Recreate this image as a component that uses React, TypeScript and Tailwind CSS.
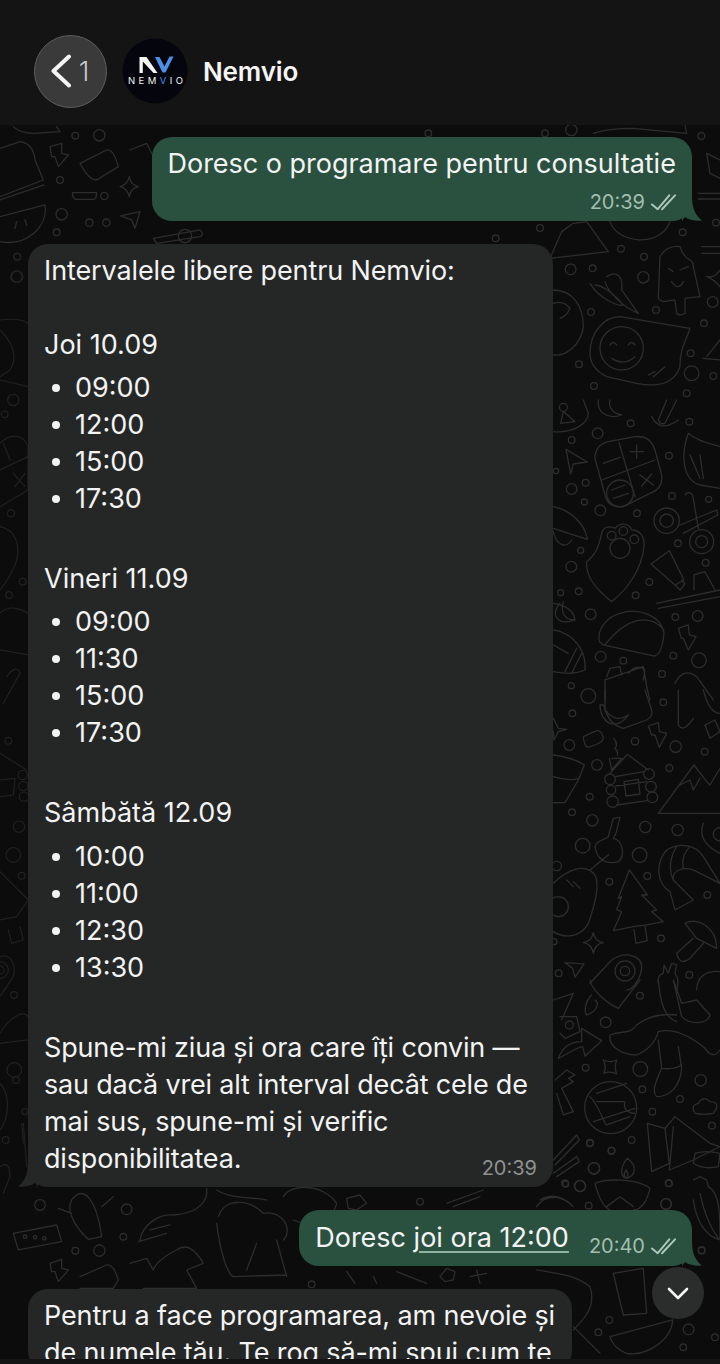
const doodles = [
  // right column, y 400-700
  {
    x: 540, y: 400,
    circles: [[173,100,16],[95,120,10],[272,70,10],[448,65,10],[387,167,10],[48,213,8],[95,267,16],[137,248,10],[133,306,9],[181,331,16],[291,340,10],[396,288,10],[506,298,9],[122,451,9],[94,500,16],[414,430,10],[497,488,10],[328,546,10],[62,578,9],[116,574,10],[287,586,10],[152,643,16],[406,651,10],[473,648,16],[182,770,16],[250,782,10],[400,767,10],[477,781,22],[366,822,10],[94,857,9],[240,280,40],[240,445,30],[215,407,13],[250,393,13],[283,418,13],[380,362,38],[380,362,20],[485,425,36],[485,425,18],[70,22,12]],
    paths: [
      "M165 175 Q165 135 205 125 L285 110 Q330 105 345 150 L365 225 Q370 265 330 280 L250 320 Q205 325 195 285 Z",
      "M237 127 L285 290 M185 240 L345 180 M270 155 H310 M290 135 V175 M190 190 L240 172 M300 225 L340 255 M335 222 L305 258 M215 270 L255 255 M220 295 L265 280",
      "M78 148 L142 186 L100 192 L92 222 Z",
      "M215 605 C170 570 135 530 140 485 C160 470 175 450 185 400 C190 375 215 380 225 385 C240 365 270 370 275 390 C300 390 315 410 312 440 C305 510 260 570 215 605 Z",
      "M420 375 L530 330 L533 345 L430 400 M435 285 Q445 270 458 285 L475 385",
      "M333 492 L388 452 L432 540 L405 555 Z M405 555 L420 570 L435 552 L425 540",
      "M350 610 L540 570 M355 625 L540 590 M462 570 L462 525 L495 515 L525 570",
      "M190 735 L340 768 Q365 770 372 700 C365 650 300 620 240 640 C200 650 170 690 178 725 Z M195 735 C260 650 330 640 372 690",
      "M415 685 L445 675 L448 705 L468 710 L445 750 L430 715 L424 715 Z",
      "M60 610 C30 640 50 680 105 660 C75 660 60 640 70 605",
      "M40 690 C100 700 140 750 135 810 C100 825 70 820 40 815 M110 745 L75 815 M125 760 L95 820 M40 735 L85 760",
      "M40 320 C90 330 135 370 142 418 L40 385 M40 395 C50 440 80 445 95 420",
      "M445 100 C480 130 530 135 540 140 M445 100 C420 170 430 240 480 255 L540 265 M450 165 L480 235 M480 165 L490 235",
      "M380 0 L355 60 Q360 75 375 70 L410 0 M335 50 Q360 100 415 60",
      "M40 95 C100 100 145 70 145 40 L130 0 M70 34 L62 70 L105 65 Z",
      "M175 0 C170 35 200 60 245 45 C215 40 205 20 210 0",
      "M195 900 L195 840 L310 800 L320 860 L330 900 M200 830 L210 805 L240 800 L245 825 M265 820 Q290 790 315 810 L310 840",
      "M405 850 Q430 800 470 830 L520 900",
      "M40 610 Q100 620 105 660",
    ],
  },
  // right column, y 690-990
  {
    x: 540, y: 690,
    circles: [[145,18,22],[97,70,10],[370,37,10],[88,165,16],[285,154,11],[407,170,17],[494,185,10],[171,225,16],[388,234,10],[149,320,10],[96,367,10],[157,391,17],[316,411,17],[413,420,17],[128,467,22],[299,495,22],[50,528,14],[322,558,10],[208,575,10],[502,615,10],[363,745,10],[42,755,9],[56,850,10],[448,855,10],[210,268,16],[213,300,14],[218,335,17],[327,252,16],[333,290,16],[337,322,16],[55,650,30],[255,843,30],[255,843,14],[540,433,20]],
    paths: [
      "M195 0 L195 60 Q210 105 250 115 L320 90 Q340 80 335 60 L315 0",
      "M180 45 C180 100 230 125 265 75 C235 95 205 85 190 45 Z",
      "M415 0 L415 105 Q430 130 460 85 M490 0 C500 40 515 70 540 70 M495 105 L525 90 L540 125 L510 145 Z",
      "M325 108 L355 98 L358 125 L380 130 L358 172 L345 135 L335 135 Z",
      "M130 140 L170 122 Q185 120 190 145 Q190 155 165 165 L145 172 Q132 170 130 140 Z",
      "M40 85 L55 115 L80 118 L55 125 L42 150 L40 125",
      "M40 195 C80 200 110 210 133 225 L115 270 L75 338 L40 338 M40 260 C70 270 100 270 118 265",
      "M210 250 L262 193 L325 240 M215 205 L245 205 L215 240 L208 205 M225 260 L312 245 M230 345 L322 332 M228 288 L320 275 M252 275 L295 268 L300 312 L258 318 Z M222 145 Q235 165 225 175 Q235 185 232 195",
      "M355 370 L540 370 M355 370 L462 225 L500 275 L510 285 L540 235 M420 285 L450 270 L460 300 L480 265",
      "M220 385 L240 382 L228 430 L220 445 C250 450 255 500 235 515 C200 525 170 510 165 470 C170 450 195 450 205 440 Z",
      "M40 580 C80 540 130 520 160 550 C180 570 170 630 145 700 C120 745 70 745 40 725 M150 540 L205 495 M80 570 L100 590 M100 575 L120 595",
      "M268 540 L322 615 L305 615 L350 660 L335 665 L370 695 L320 705 L280 710 L220 722 L245 665 L230 660 L245 620 L235 625 Z M282 718 L288 760 L322 752 L315 710",
      "M380 480 C420 455 470 465 490 500 L540 580 L460 540 C430 530 395 540 400 570 L460 630 L405 660 L390 605 C350 580 345 520 380 480 Z M410 470 C390 500 385 540 400 570 M450 470 C430 490 425 510 430 535",
      "M435 700 C470 680 530 710 530 775 L470 745 Z M460 745 L410 790 Q420 830 450 805 L490 760",
      "M150 880 L215 810 C260 780 305 800 305 830 C305 860 280 900 260 900",
      "M355 880 Q350 855 370 850 L372 825 L385 850 L395 820 L410 825 L405 850 Q420 870 410 900",
      "M470 900 C470 860 500 840 540 845",
      "M490 400 C475 440 500 470 540 490",
      "M160 728 Q165 755 190 758 Q165 762 160 790 Q155 762 130 758 Q155 755 160 728",
      "M75 818 L132 822 L105 862 L98 835 Z",
    ],
  },
  // right column, y 980-1280
  {
    x: 540, y: 980,
    circles: [[300,47,10],[197,127,16],[137,263,10],[301,267,22],[307,328,10],[482,301,17],[420,357,10],[337,395,10],[516,437,10],[150,490,10],[275,480,10],[214,512,10],[162,565,17],[77,612,9],[120,618,17],[386,610,10],[378,672,16],[146,677,10],[485,812,10],[212,383,78],[88,135,12]],
    paths: [
      "M150 350 C180 380 190 430 200 435 M255 365 C245 400 285 400 285 400 M160 425 L285 385 M200 435 L270 410 M170 365 L250 365 M170 340 L260 310",
      "M190 240 Q210 250 230 240 Q222 262 230 282 Q210 272 192 280 Q200 260 190 240",
      "M465 400 Q450 375 475 370 Q490 345 510 365 Q535 365 530 385 L520 400 Q490 405 465 400",
      "M322 430 L375 445 L405 410 L510 490 L540 500 L460 540 L388 570 L400 440 M322 430 L335 575 L388 550 L375 445",
      "M465 520 Q500 510 540 520 L535 560 Q490 570 460 550 Z",
      "M460 600 L480 590 L500 600 L505 620 C540 640 540 700 540 780 C500 770 470 730 460 660 M480 640 C490 690 510 740 535 775",
      "M165 610 C200 595 290 595 330 625 C320 670 300 690 280 690 M165 610 C175 650 190 680 210 690",
      "M262 535 C240 560 240 590 258 595 C285 590 295 560 262 535 Z M258 570 Q248 585 258 595 Q270 585 258 570",
      "M410 105 C370 100 330 105 290 135 C270 165 250 150 210 165 C205 195 240 225 290 225 C325 210 345 190 355 155 C395 145 440 160 495 205",
      "M355 180 L365 265 C345 310 335 335 350 350 C390 350 420 320 425 265 L415 200 M365 265 Q400 270 425 255 M495 205 Q520 240 540 210",
      "M355 0 C360 60 370 110 410 125 M400 0 L425 70 L470 60 L510 105 C500 135 450 135 425 110 Z",
      "M55 235 C70 195 100 185 125 185 L125 145 L185 182 L135 228 L128 200 C100 205 80 225 55 235 Z",
      "M155 45 C130 70 135 100 140 105 C170 95 180 70 165 60 M150 0 C155 30 200 70 235 85 L300 0",
      "M45 300 L80 270 L105 285 L85 295 L100 305 L65 325 L100 395 L70 405 L50 340",
      "M40 540 L110 465 L118 480 L45 555 M40 580 L110 530 L118 545 L50 590",
      "M40 60 L100 40 L65 120 M60 110 L110 110 L120 155 L75 175 L60 160",
      "M0 660 Q50 630 100 680 M200 680 L240 650 L280 680",
    ],
  },
  // top, under the first bubbles
  {
    x: 0, y: 0,
    circles: [[226,407,10],[298,406,17],[180,540,10],[313,588,11],[185,643,17],[268,668,11],[319,668,11],[170,697,10],[52,770,10],[50,830,17],[555,708,20]],
    paths: [
      "M0 445 L60 425 Q100 430 105 480 L130 540 L0 590 M0 600 L132 555",
      "M0 650 L135 615 C145 680 80 740 0 725 M50 665 L45 685 M75 660 L80 675",
      "M150 440 L185 430 L185 460 L205 465 L175 500 L165 470 L155 470 Z",
      "M240 490 L320 450 Q340 445 355 500 L290 540 Q265 540 240 490",
      "M218 578 L290 578 Q290 598 280 598 L225 598 Q215 590 218 578",
      "M388 530 Q392 555 415 560 Q392 565 388 590 Q382 565 360 560 Q382 555 388 530",
      "M390 450 L440 430 L460 470",
      "M362 648 L420 635 L405 685 L395 660 Z",
      "M460 715 L600 690 Q615 705 600 710 L470 730 Z",
      "M40 380 Q60 400 100 400 L180 395 L170 380",
    ],
  },
  // top right corner
  {
    x: 360, y: 100,
    circles: [[205,100,10],[555,100,10],[634,90,17],[1024,108,10],[540,384,10],[407,415,10],[968,397,10],[1068,368,10],[783,446,10],[852,470,10],[632,508,16],[698,505,10],[850,532,17],[1058,606,16],[693,636,10],[888,630,10],[1032,670,10],[657,793,10],[992,760,10],[995,820,22],[1060,828,10],[702,858,10],[980,880,10],[785,745,65]],
    paths: [
      "M570 475 L605 395 L640 370 L680 365 L745 455 Z",
      "M750 365 C770 430 900 445 930 365",
      "M900 470 Q920 435 960 440 C975 490 1000 470 1000 500 L1020 590 L975 595 L975 640 Q960 650 950 640 L945 600 L910 605 Q895 600 895 590 Z M925 505 L940 515 M960 510 L985 500 M935 545 Q955 575 970 545",
      "M690 550 C720 600 780 620 790 615 C770 590 730 555 705 555 M740 530 C770 510 790 530 785 570 L835 640 C790 620 745 580 735 545",
      "M690 760 C690 700 730 650 780 650 L990 685 C980 720 960 740 960 800 C940 860 880 860 830 850 L740 830 C710 815 690 790 690 760",
      "M750 735 Q760 720 770 735 M805 735 Q815 720 825 735 M755 775 Q790 800 825 770 M865 825 L885 815 M880 830 L915 800",
      "M580 570 C640 570 670 620 670 680 C665 730 620 770 580 765 M580 610 Q610 600 630 625 Q620 650 600 655",
      "M1015 280 L1080 280 M1015 297 L1080 297 M1025 440 L1080 440 M1025 460 L1080 460",
      "M1040 530 Q1065 535 1080 510 M1040 530 Q1065 540 1080 560",
      "M1040 770 L1080 720 M1030 775 L1080 780",
      "M1040 160 L1080 180 M1040 160 L1050 220 L1080 235",
      "M700 100 C730 90 760 85 820 85 L980 100 L975 75",
    ],
  },
  // gap rows near the bottom
  {
    x: 0, y: 1100,
    circles: [[120,315,16],[380,328,16],[370,410,10],[226,452,10],[298,452,17],[75,410,5],[105,412,5],[133,415,5]],
    paths: [
      "M215 300 C250 250 290 300 305 410 L265 418 C235 390 195 340 215 300 M215 340 L175 325 M305 320 L340 290",
      "M40 400 L170 375 L185 425 L55 450 Z",
      "M420 420 C430 370 480 340 520 345 C600 340 625 300 620 265 M415 425 L500 400 M450 390 L510 375",
      "M650 270 C700 300 760 290 800 300 M650 370 C660 450 680 520 700 530 L860 525 M740 510 L770 430 M830 420 L860 530",
      "M150 490 L185 478 L185 505 L205 510 L175 545 L165 515 L155 515 Z",
      "M240 530 L320 495 Q340 490 355 540 L340 565 L240 565",
      "M390 490 L440 475 L460 510 Q470 480 530 450 Q570 420 610 490 L560 510 L590 565 L430 565",
      "M655 350 C670 300 740 290 790 340 C850 330 880 390 850 420",
    ],
  },
  {
    x: 280, y: 1140,
    circles: [[930,8,10],[995,32,10],[942,85,17],[855,130,10],[900,138,16],[1167,130,10],[1158,192,16],[420,185,10],[1265,330,10],[988,540,10],[955,577,10],[1226,568,16],[1305,592,10],[1210,622,10],[95,433,10]],
    paths: [
      "M990 590 L1178 540 C1175 600 1100 650 1040 640 Q1000 625 990 590",
      "M1000 400 L1090 385 L1100 520 L1030 525 Z",
      "M770 390 C820 400 880 400 930 440 C950 500 910 540 880 570",
      "M480 410 L500 385 L525 395 L520 420 L495 425 Z M570 410 L620 400 M590 390 L600 430",
      "M200 395 L225 430 M280 410 L290 430 M350 395 L440 430",
      "M880 560 L960 640",
      "M10 170 C30 130 130 130 170 190 C160 240 80 260 40 240",
      "M200 175 L240 165 L260 190 L230 210 L205 205 Z",
      "M500 190 L610 150 M520 200 L600 170",
      "M770 200 C790 170 830 160 870 190",
    ],
  },
];

const dimDoodles = [
  {
    x: 0, y: 230,
    circles: [[52,80,10],[52,140,17],[40,510,17],[14,553,10],[33,850,11],[68,1055,10],[27,1095,10]],
    paths: [
      "M0 270 C40 265 70 270 84 280 M0 300 C40 340 55 380 30 420 L0 440 M0 450 L84 470",
      "M0 640 C30 610 70 610 84 650 L84 780 L0 830 M10 640 L30 690 M40 730 L75 770 M75 730 L45 770 M0 720 L84 680",
      "M0 890 C50 900 60 950 50 990 C40 1030 0 1080 0 1080",
      "M0 1150 C30 1120 70 1140 84 1150 M0 1260 L84 1275 M20 1340 Q50 1300 60 1330 L10 1420",
    ],
  },
  {
    x: 0, y: 700,
    circles: [[25,122,10],[57,380,17],[40,465,22],[65,527,10],[42,885,10],[43,1110,22],[48,1140,10],[75,1235,9],[17,1320,10],[68,225,14],[70,258,14],[72,290,14],[0,810,25],[0,810,12]],
    paths: [
      "M0 160 L80 210 M0 240 L45 235 L40 285 L0 290",
      "M0 515 L85 600 L50 650 L0 660 M25 690 L35 730 L70 720 L60 680",
      "M0 770 C30 760 50 790 40 830 L0 890",
      "M0 1000 C30 950 70 930 84 950 M0 1030 L84 1020",
      "M0 1150 C30 1180 30 1250 0 1290 M70 1270 L80 1400 M65 1270 L70 1330",
      "M0 1400 Q30 1380 30 1430 L10 1480",
    ],
  },
];

const Wallpaper = () => (
  <svg className="absolute inset-0 w-full h-full" viewBox="0 125 720 1234" fill="none" strokeLinecap="round" strokeLinejoin="round">
    <g stroke="#2d2d2d" strokeWidth="3.9">
      {doodles.map((d, i) => (
        <g key={i} transform={`translate(${d.x} ${d.y}) scale(0.3333)`}>
          {d.paths.map((p, j) => <path key={j} d={p} />)}
          {d.circles.map((c, j) => <circle key={j} cx={c[0]} cy={c[1]} r={c[2]} />)}
        </g>
      ))}
    </g>
    <g stroke="#212121" strokeWidth="3.6">
      {dimDoodles.map((d, i) => (
        <g key={i} transform={`translate(${d.x} ${d.y}) scale(0.3333)`}>
          {d.paths.map((p, j) => <path key={j} d={p} />)}
          {d.circles.map((c, j) => <circle key={j} cx={c[0]} cy={c[1]} r={c[2]} />)}
        </g>
      ))}
    </g>
  </svg>
);

const Logo = () => (
  <svg className="w-[66px] h-[66px] shrink-0" viewBox="122 38 66 66">
    <circle cx="155" cy="71" r="32.5" fill="#05060d" />
    <path d="M139.5 57 H146.5 L157.5 73 H153.5 L142.8 61.5 V73 H139.5 Z" fill="#f4f4f4" />
    <path d="M155 57 H159.5 L164.5 66.5 L169.5 56.5 H173.5 L165.5 72.5 H162.5 Z" fill="#4a8fe8" />
    <text x="128" y="83.5" fontFamily="Inter, sans-serif" fontSize="9.5" textLength="55" fill="#f2f2f2">
      NEM<tspan fill="#4a8fe8">V</tspan>IO
    </text>
  </svg>
);

const Checks = () => (
  <svg className="w-[25px] h-[17px]" viewBox="0 0 26 17" fill="none" stroke="#adc9ba" strokeWidth="2" strokeLinecap="round" strokeLinejoin="round">
    <path d="M1 10.5 L7 15.5 L19 1" />
    <path d="M11.5 15.5 L25 1" />
  </svg>
);

const Tail = ({ side, color }: { side: "left" | "right"; color: string }) => (
  <svg
    className={side === "right" ? "absolute right-[-10px] bottom-0 w-[20px] h-[25px]" : "absolute left-[-10px] bottom-0 w-[20px] h-[25px] -scale-x-100"}
    viewBox="0 0 20 25"
    fill={color}
  >
    <path d="M0 0 H10 C10 12 13 19 20 24.6 C13 25 7 24 3 21 C1 23 0 25 0 25 Z" />
  </svg>
);

const Slots = ({ day, hours, dayClass, listClass }: { day: string; hours: string[]; dayClass: string; listClass: string }) => (
  <div>
    <p className={dayClass}>{day}</p>
    <ul className={listClass}>
      {hours.map((h) => (
        <li key={h} className="flex items-center">
          <span className="w-[8px] h-[8px] ml-[8px] mr-[15px] rounded-full bg-[#f2f2f2]" />
          {h}
        </li>
      ))}
    </ul>
  </div>
);

export default function App() {
  return (
    <div className="w-[720px] h-[1364px] flex flex-col overflow-hidden bg-[#141414] text-[#f2f3f2] text-[27px] leading-[37px] font-['Inter',sans-serif]">
      <header className="h-[125px] shrink-0 flex items-center pl-[34px] pr-4 pt-[17px] bg-[#141414]">
        <div className="w-[73px] h-[73px] flex items-center justify-center gap-[8px] pr-[1px] rounded-full border border-[#5e5e5e] bg-[#3a3a3a]">
          <svg className="w-[20px] h-[34px]" viewBox="0 0 20 34" fill="none" stroke="#f5f5f5" strokeWidth="4" strokeLinecap="round" strokeLinejoin="round">
            <path d="M18 2.5 L2.5 17 L18 31.5" />
          </svg>
          <span className="text-[27px] font-light text-[#c9c9c9]">1</span>
        </div>
        <div className="ml-[15px]"><Logo /></div>
        <span className="ml-[15px] text-[26px] font-semibold tracking-[-0.15px] text-[#f5f5f5]">Nemvio</span>
      </header>

      <main className="relative flex-1 overflow-hidden bg-[#0c0c0c]">
        <Wallpaper />
        <div className="relative flex flex-col pt-[12px] px-[28px] gap-[23px]">
          <div className="relative self-end w-[540px] rounded-[20px] bg-[#2a5040] pl-[15.5px] pt-[8px] pr-4 pb-[7px]">
            <p className="whitespace-nowrap tracking-[-0.02px]">Doresc o programare pentru consultatie</p>
            <div className="mt-[8px] flex justify-end items-center gap-[6px] text-[20px] leading-[24px] text-[#a0bfae]">
              20:39
              <Checks />
            </div>
            <Tail side="right" color="#2a5040" />
          </div>

          <div className="relative self-start w-[525px] rounded-[20px] bg-[#252727] px-4 pt-[8px] pb-[7px]">
            <p className="tracking-[-0.12px]">Intervalele libere pentru Nemvio:</p>
            <Slots dayClass="mt-[37px]" listClass="mt-[6px]" day="Joi 10.09" hours={["09:00", "12:00", "15:00", "17:30"]} />
            <Slots dayClass="mt-[43px]" listClass="mt-[6px]" day="Vineri 11.09" hours={["09:00", "11:30", "15:00", "17:30"]} />
            <Slots dayClass="mt-[43px]" listClass="mt-[7px]" day="Sâmbătă 12.09" hours={["10:00", "11:00", "12:30", "13:30"]} />
            <p className="mt-[43px] tracking-[-0.18px]">
              Spune-mi ziua și ora care îți convin —<br />
              sau dacă vrei alt interval decât cele de<br />
              mai sus, spune-mi și verific<br />
              disponibilitatea.
            </p>
            <div className="-mt-[21px] text-right text-[20px] leading-[24px] text-[#8e9190]">20:39</div>
            <Tail side="left" color="#252727" />
          </div>

          <div className="relative self-end flex items-end rounded-[20px] bg-[#2a5040] px-4 pt-[9px] pb-[10px]">
            <p>
              Doresc <span className="underline decoration-[#8fb3a0] decoration-[1.5px] underline-offset-[4px]">joi ora 12:00</span>
            </p>
            <div className="ml-[20px] -mb-[2px] flex items-center gap-[6px] text-[20px] leading-[24px] text-[#a0bfae]">
              20:40
              <Checks />
            </div>
            <Tail side="right" color="#2a5040" />
          </div>

          <div className="self-start w-[544px] rounded-[20px] bg-[#252727] px-4 pt-[8px] tracking-[-0.13px] whitespace-nowrap">
            <p>
              Pentru a face programarea, am nevoie și<br />
              de numele tău. Te rog să-mi spui cum te
            </p>
          </div>
        </div>

        <button className="absolute left-[652px] top-[1142px] w-[52px] h-[52px] flex items-center justify-center rounded-full bg-[#2b2c2c]">
          <svg className="w-[22px] h-[13px]" viewBox="0 0 22 13" fill="none" stroke="#f5f5f5" strokeWidth="2.6" strokeLinecap="round" strokeLinejoin="round">
            <path d="M2 2 L11 11 L20 2" />
          </svg>
        </button>
      </main>

      <div className="h-[5px] shrink-0 bg-[#141414]" />
    </div>
  );
}
